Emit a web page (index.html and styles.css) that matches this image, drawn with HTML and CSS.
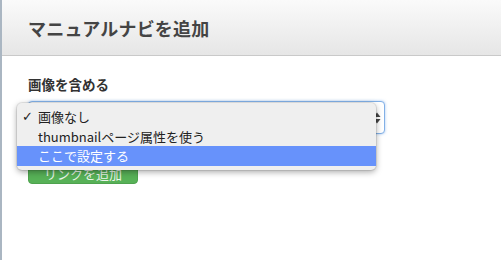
FILE: index.html
```html
<!DOCTYPE html>
<html lang="ja">

<head>
  <meta charset="UTF-8">
  <meta name="viewport" content="width=device-width, initial-scale=1.0">
  <title>マニュアルナビを追加</title>
  <link rel="stylesheet" href="styles.css">
</head>

<body>
  <div class="dialog">
    <div class="dialog-header">
      <h1 class="dialog-title">マニュアルナビを追加</h1>
    </div>
    <div class="dialog-body">
      <label class="field-label">画像を含める</label>
      <div class="select-wrap">
        <div class="select-box">
          <span class="select-arrows">
            <svg width="8" height="12" viewBox="0 0 8 12">
              <path d="M4 0.5 L7.5 5 L0.5 5 Z" fill="#444" />
              <path d="M4 11.5 L7.5 7 L0.5 7 Z" fill="#444" />
            </svg>
          </span>
        </div>
        <ul class="select-menu">
          <li class="menu-item"><span class="check">✓</span>画像なし</li>
          <li class="menu-item">thumbnailページ属性を使う</li>
          <li class="menu-item selected">ここで設定する</li>
        </ul>
      </div>
      <button class="btn-add" type="button">リンクを追加</button>
    </div>
  </div>
</body>

</html>
```

FILE: styles.css
```css
html,
body {
  margin: 0;
  height: 100%;
  background: #ffffff;
  font-family: "Noto Sans CJK JP", "Noto Sans", sans-serif;
}

.dialog {
  height: 260px;
  border-left: 2px solid #aab6c2;
  background: #fff;
}

.dialog-header {
  height: 56px;
  box-sizing: border-box;
  padding: 0 26px;
  display: flex;
  align-items: center;
  background: linear-gradient(to bottom, #fafafa, #e6e6e6);
  border-bottom: 1px solid #c9c9c9;
}

.dialog-title {
  margin: 0;
  font-size: 18px;
  font-weight: bold;
  color: #444;
  letter-spacing: 0.2px;
}

.dialog-body {
  padding: 19px 26px;
}

.field-label {
  display: block;
  font-size: 13.5px;
  font-weight: bold;
  color: #333;
  line-height: 18px;
  margin-bottom: 8px;
}

.select-wrap {
  position: relative;
  width: 357px;
}

.select-box {
  height: 33px;
  box-sizing: border-box;
  border: 1px solid #82b0e6;
  border-radius: 4px;
  box-shadow: 0 0 3px rgba(90, 150, 230, 0.55);
  background: #fff;
  display: flex;
  align-items: center;
  justify-content: flex-end;
  padding-right: 3px;
}

.select-arrows {
  display: flex;
}

.select-menu {
  position: absolute;
  left: -11px;
  top: 2px;
  width: 359px;
  margin: 0;
  padding: 4px 0 4px;
  list-style: none;
  background: #efefef;
  border-radius: 5px;
  box-shadow: 0 2px 6px rgba(0, 0, 0, 0.35), 0 0 0 1px rgba(0, 0, 0, 0.08);
}

.menu-item {
  position: relative;
  height: 19.5px;
  line-height: 19.5px;
  padding-left: 21px;
  font-size: 13px;
  color: #222;
}

.menu-item.selected {
  background: #6792fb;
  color: #fff;
}

.check {
  position: absolute;
  left: 5px;
  top: 0;
  font-family: "DejaVu Sans", sans-serif;
  font-size: 13px;
  font-weight: bold;
}

.btn-add {
  margin-top: 16px;
  width: 110px;
  height: 34px;
  border: 1px solid #4ea24e;
  border-radius: 4px;
  background: #57b157;
  color: #eaf5ea;
  font-family: "Noto Sans CJK JP", sans-serif;
  font-size: 13px;
  line-height: 22px;
  padding-top: 12px;
}
```
